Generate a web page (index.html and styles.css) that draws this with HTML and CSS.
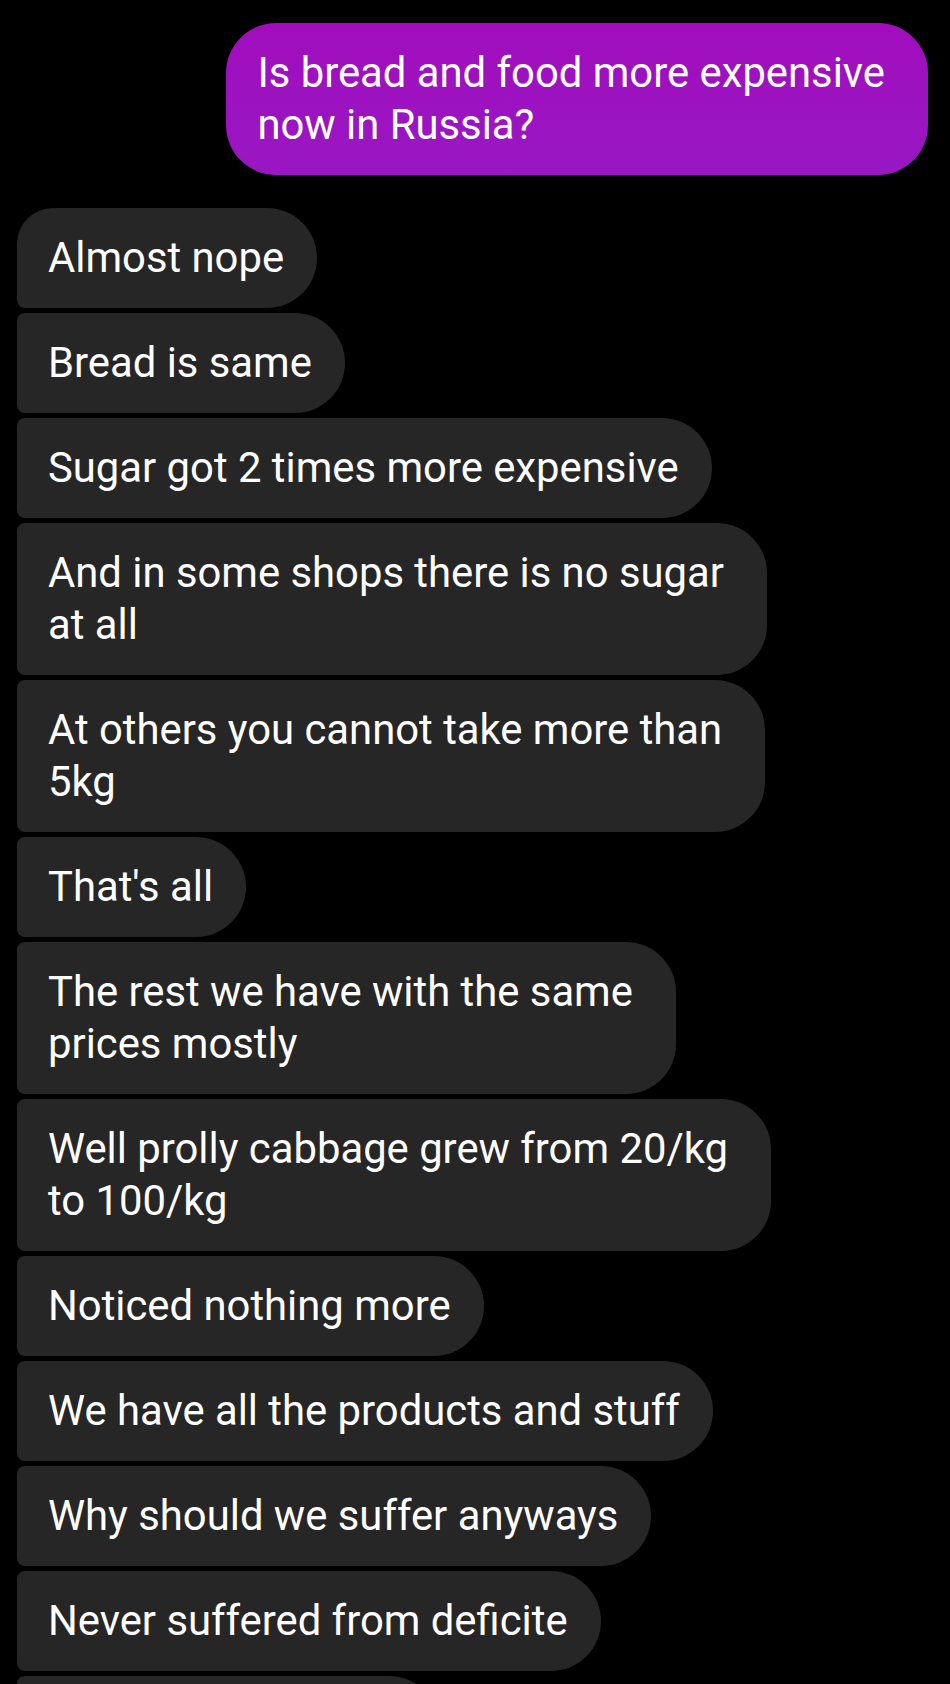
FILE: index.html
```html
<!DOCTYPE html>
<html lang="en">
<head>
    <meta charset="UTF-8">
    <meta name="viewport" content="width=device-width, initial-scale=1.0">
    <title>Chat</title>
    <link rel="stylesheet" href="styles.css">
</head>
<body>
  <div class="chat">
    <div class="msg-group sent">
        <div class="bubble wrap">Is bread and food more expensive<br>now in Russia?</div>
    </div>

    <div class="msg-group received">
        <div class="bubble">Almost nope</div>
        <div class="bubble">Bread is same</div>
        <div class="bubble">Sugar got 2 times more expensive</div>
        <div class="bubble wrap">And in some shops there is no sugar<br>at all</div>
        <div class="bubble wrap">At others you cannot take more than<br>5kg</div>
        <div class="bubble">That's all</div>
        <div class="bubble wrap">The rest we have with the same<br>prices mostly</div>
        <div class="bubble wrap">Well prolly cabbage grew from 20/kg<br>to 100/kg</div>
        <div class="bubble">Noticed nothing more</div>
        <div class="bubble">We have all the products and stuff</div>
        <div class="bubble">Why should we suffer anyways</div>
        <div class="bubble">Never suffered from deficite</div>
        <div class="bubble">Even in the nineties</div>
    </div>
  </div>
</body>
</html>
```

FILE: styles.css
```css
* {
    margin: 0;
    padding: 0;
    box-sizing: border-box;
}

body {
    font-family: Roboto, "Noto Sans", sans-serif;
    background-color: #000;
    color: #fff;
}

.chat {
    padding: 23px 22px 0 17px;
    display: flex;
    flex-direction: column;
    gap: 33px;
}

.msg-group {
    display: flex;
    flex-direction: column;
    gap: 5px;
}

.msg-group.sent {
    align-items: flex-end;
}

.msg-group.received {
    align-items: flex-start;
}

/* Bubbles */
.bubble {
    font-size: 41.8px;
    line-height: 52px;
    padding: 24px 33px 24px 31px;
    white-space: nowrap;
}

.bubble.wrap {
    padding-right: 43px;
}

.sent .bubble {
    background: linear-gradient(180deg, #a10dbd 0%, #9818c3 100%);
    border-radius: 50px;
}

.received .bubble {
    background-color: #262626;
    border-radius: 8px 50px 50px 8px;
}

.received .bubble:first-child {
    border-top-left-radius: 36px;
}
```
